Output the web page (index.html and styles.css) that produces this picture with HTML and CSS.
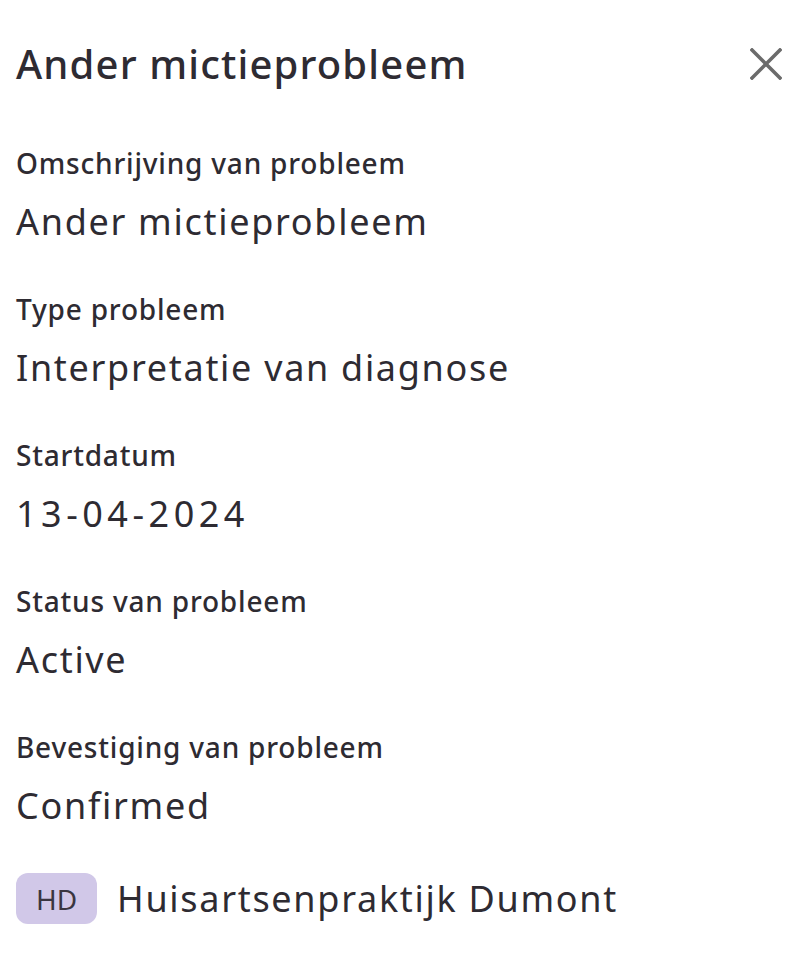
FILE: index.html
```html
<!DOCTYPE html>
<html lang="nl">
<head>
<meta charset="utf-8">
<title>Ander mictieprobleem</title>
<link rel="stylesheet" href="styles.css">
</head>
<body>
<div class="panel">
  <header class="head">
    <h1 class="title">Ander mictieprobleem</h1>
    <button class="close" aria-label="Sluiten">
      <svg width="32" height="32" viewBox="0 0 32 32"><path d="M2 2 L30 30 M30 2 L2 30" stroke="#6b6b6b" stroke-width="3.6" stroke-linecap="square" fill="none"/></svg>
    </button>
  </header>
  <dl class="fields">
    <div class="field">
      <dt class="label">Omschrijving van probleem</dt>
      <dd class="value">Ander mictieprobleem</dd>
    </div>
    <div class="field">
      <dt class="label">Type probleem</dt>
      <dd class="value">Interpretatie van diagnose</dd>
    </div>
    <div class="field">
      <dt class="label">Startdatum</dt>
      <dd class="value value-date">13-04-2024</dd>
    </div>
    <div class="field">
      <dt class="label">Status van probleem</dt>
      <dd class="value">Active</dd>
    </div>
    <div class="field">
      <dt class="label">Bevestiging van probleem</dt>
      <dd class="value">Confirmed</dd>
    </div>
  </dl>
  <div class="source">
    <span class="badge">HD</span>
    <span class="org">Huisartsenpraktijk Dumont</span>
  </div>
</div>
</body>
</html>
```
FILE: styles.css
```css
html, body {
  margin: 0;
  padding: 0;
  background: #ffffff;
}
body {
  font-family: "Noto Sans", "DejaVu Sans", sans-serif;
  color: #2e2b32;
}
.panel {
  padding: 40px 16px 0 16px;
  display: flex;
  flex-direction: column;
}
.head {
  display: flex;
  align-items: center;
  justify-content: space-between;
}
.title {
  margin: 0;
  font-size: 40px;
  line-height: 48px;
  font-weight: 500;
  letter-spacing: 1.15px;
}
.close {
  border: 0;
  background: none;
  padding: 0;
  margin-right: 4px;
  width: 32px;
  height: 32px;
  display: flex;
}
.fields {
  margin: 59px 0 0 0;
  display: flex;
  flex-direction: column;
  gap: 49px;
}
.field {
  display: flex;
  flex-direction: column;
  gap: 21px;
}
.label {
  margin: 0;
  font-size: 28px;
  line-height: 32px;
  font-weight: 500;
  letter-spacing: 0.8px;
}
.value {
  margin: 0;
  font-size: 36px;
  line-height: 44px;
  font-weight: 400;
  letter-spacing: 1.7px;
}
.value-date {
  letter-spacing: 4.5px;
}
.source {
  margin-top: 45px;
  display: flex;
  align-items: center;
  gap: 20px;
}
.badge {
  width: 81px;
  height: 51px;
  border-radius: 12px;
  background: #d1c8e8;
  display: flex;
  align-items: center;
  justify-content: center;
  font-size: 28px;
  font-weight: 400;
  color: #3a3640;
}
.org {
  font-size: 36px;
  line-height: 44px;
  letter-spacing: 1.7px;
}
```
